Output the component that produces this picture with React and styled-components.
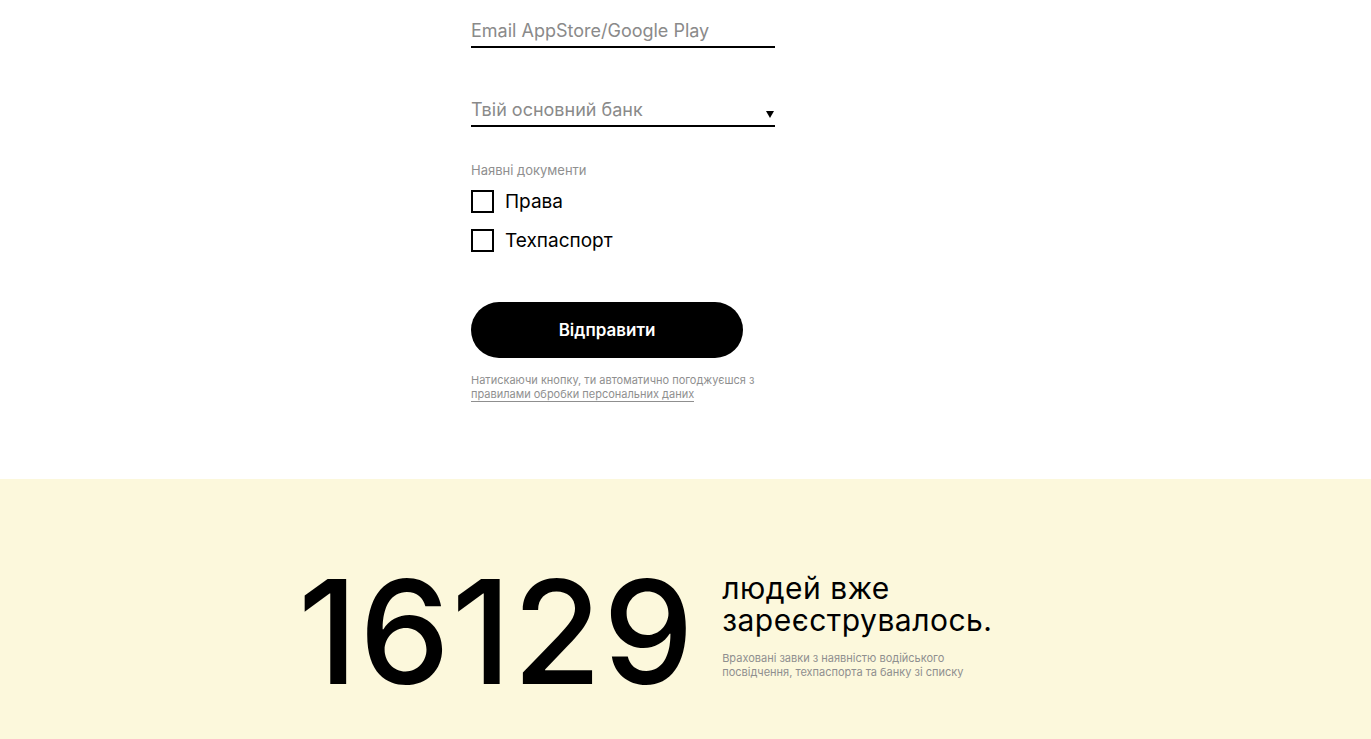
import React from 'react'
import styled, { createGlobalStyle } from 'styled-components'

const GlobalStyle = createGlobalStyle`
	html, body {
		margin: 0;
		padding: 0;
		background: #ffffff;
		font-family: Inter, "Liberation Sans", Arial, sans-serif;
		color: #000000;
	}
`

const Page = styled.div`
	display: flex;
	flex-direction: column;
`

const FormSection = styled.section`
	display: flex;
	flex-direction: column;
	padding: 12px 0 78px 471px;
`

const Form = styled.form`
	display: flex;
	flex-direction: column;
	width: 304px;
`

const Field = styled.div`
	box-sizing: border-box;
	display: flex;
	align-items: center;
	height: 36px;
	padding-top: 3px;
	border-bottom: 2px solid #000000;
	margin-bottom: ${ props => props.gap || 0 }px;
`

const Input = styled.input`
	width: 100%;
	border: 0;
	outline: 0;
	padding: 0;
	background: transparent;
	font-family: inherit;
	font-size: 18px;
	color: #000000;
	&::placeholder {
		color: #8a8a8a;
	}
`

const SelectText = styled.span`
	flex: 1;
	font-size: 18px;
	color: #8a8a8a;
`

const Arrow = styled.span`
	width: 0;
	height: 0;
	margin: 10px 1px 0 0;
	border-left: 4px solid transparent;
	border-right: 4px solid transparent;
	border-top: 7px solid #000000;
`

const Label = styled.div`
	margin: 35px 0 12px;
	font-size: 13px;
	line-height: 16px;
	color: #8f8f8f;
`

const CheckRow = styled.label`
	display: flex;
	align-items: center;
	gap: 11px;
	height: 22px;
	margin-bottom: 17px;
	font-size: 19px;
	cursor: pointer;
`

const Box = styled.span`
	box-sizing: border-box;
	width: 23px;
	height: 23px;
	border: 2px solid #000000;
`

const Button = styled.button`
	width: 272px;
	height: 56px;
	margin-top: 34px;
	border: 0;
	border-radius: 28px;
	background: #000000;
	color: #ffffff;
	font-family: inherit;
	font-size: 17px;
	font-weight: 600;
	cursor: pointer;
`

const Note = styled.p`
	margin: 15px 0 0;
	font-size: 11px;
	line-height: 14px;
	color: #8f8f8f;
	a {
		color: #8f8f8f;
		text-decoration: none;
		border-bottom: 1px solid #8f8f8f;
	}
`

const Counter = styled.section`
	display: flex;
	align-items: flex-start;
	min-height: 260px;
	padding: 81px 0 0 298px;
	background: #fcf8dc;
`

const Count = styled.div`
	font-size: 144px;
	font-weight: 500;
	line-height: 1;
	letter-spacing: 1.5px;
`

const Caption = styled.div`
	display: flex;
	flex-direction: column;
	margin: 12px 0 0 27px;
`

const CaptionTitle = styled.div`
	font-size: 30px;
	line-height: 32px;
	letter-spacing: 0.5px;
`

const CaptionNote = styled.div`
	margin-top: 15px;
	font-size: 11px;
	line-height: 14px;
	color: #8f8f8f;
`

export default () => {

	return (
		<Page>
			<GlobalStyle />
			<FormSection>
				<Form onSubmit={ e => e.preventDefault() }>
					<Field gap={ 43 }>
						<Input placeholder="Email AppStore/Google Play" />
					</Field>
					<Field>
						<SelectText>Твій основний банк</SelectText>
						<Arrow />
					</Field>
					<Label>Наявні документи</Label>
					<CheckRow>
						<Box />
						Права
					</CheckRow>
					<CheckRow>
						<Box />
						Техпаспорт
					</CheckRow>
					<Button type="submit">Відправити</Button>
					<Note>
						Натискаючи кнопку, ти автоматично погоджуєшся з<br />
						<a href="#">правилами обробки персональних даних</a>
					</Note>
				</Form>
			</FormSection>
			<Counter>
				<Count>16129</Count>
				<Caption>
					<CaptionTitle>
						людей вже<br />
						зареєструвалось.
					</CaptionTitle>
					<CaptionNote>
						Враховані завки з наявністю водійського<br />
						посвідчення, техпаспорта та банку зі списку
					</CaptionNote>
				</Caption>
			</Counter>
		</Page>
	)

}
